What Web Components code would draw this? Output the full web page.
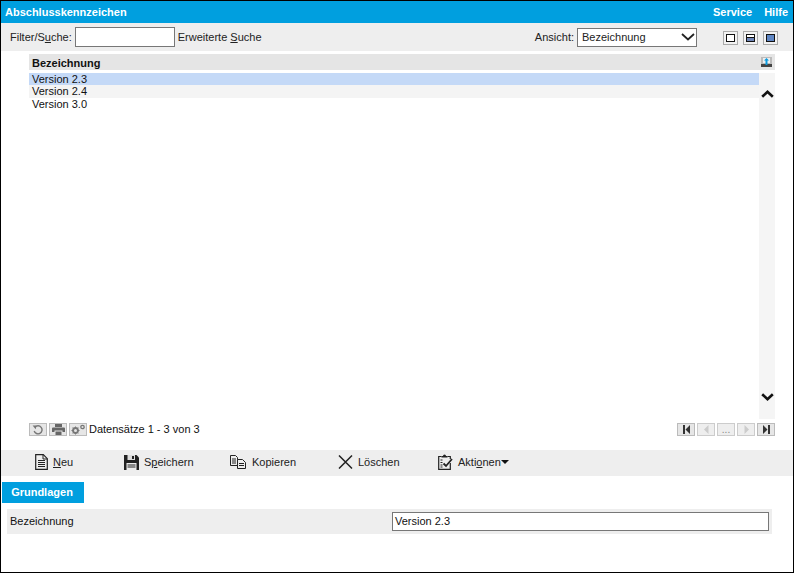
<!DOCTYPE html>
<html lang="de">
<head>
<meta charset="utf-8">
<title>Abschlusskennzeichen</title>
<style>
  html, body { margin: 0; padding: 0; background: #fff; }
  body { font: 11px "Liberation Sans", Arial, sans-serif; color: #111; }
</style>
</head>
<body>
<app-window>
  <title-bar heading="Abschlusskennzeichen"></title-bar>
  <filter-bar></filter-bar>
  <data-grid></data-grid>
  <grid-footer></grid-footer>
  <action-bar></action-bar>
  <tab-strip label="Grundlagen"></tab-strip>
  <form-row label="Bezeichnung" value="Version 2.3"></form-row>
</app-window>

<script>
const ICONS = {
  reload: `<svg width="12" height="11" viewBox="0 0 12 11"><path d="M3 3.2A4 4 0 1 1 2.2 7" fill="none" stroke="#777" stroke-width="1.4"/><path d="M.6 1.4 4.6 1.4 3.6 5.2Z" fill="#777"/></svg>`,
  print: `<svg width="13" height="11" viewBox="0 0 13 11"><path d="M3 0h7v3H3zM1 3.5h11a1 1 0 0 1 1 1V8h-2.500V6.500h-8V8H0V4.500a1 1 0 0 1 1-1zM3.500 7.500h6V11h-6z" fill="#666"/></svg>`,
  gears: `<svg width="16" height="11" viewBox="0 0 16 11"><circle cx="5.500" cy="6.500" r="2.600" fill="none" stroke="#777" stroke-width="1.600"/><path d="M5.500 2.500v8M1.500 6.500h8M2.700 3.700l5.600 5.600M8.300 3.700l-5.600 5.600" stroke="#777"/><circle cx="5.500" cy="6.500" r="1.500" fill="#e6e6e6"/><circle cx="12.500" cy="3" r="1.700" fill="none" stroke="#777" stroke-width="1.300"/></svg>`,
  first: `<svg width="9" height="9" viewBox="0 0 9 9"><path d="M1 0h2v9H1zM8 0v9L3.500 4.500z" fill="#333"/></svg>`,
  prev: `<svg width="9" height="9" viewBox="0 0 9 9"><path d="M6.500 0v9L2 4.500z" fill="#ccc"/></svg>`,
  next: `<svg width="9" height="9" viewBox="0 0 9 9"><path d="M2.500 0v9L7 4.500z" fill="#ccc"/></svg>`,
  last: `<svg width="9" height="9" viewBox="0 0 9 9"><path d="M1 0v9L5.500 4.500zM6 0h2v9H6z" fill="#333"/></svg>`,
  neu: `<svg width="13" height="16" viewBox="0 0 13 16"><path d="M.7.700h7.600l4 4v10.600H.7z" fill="none" stroke="#222" stroke-width="1.200"/><path d="M8 .7v4.300h4.300M3 6.500h7M3 8.500h7M3 10.500h7M3 12.500h7" fill="none" stroke="#222"/></svg>`,
  save: `<svg width="15" height="15" viewBox="0 0 15 15"><path d="M0 0h12.500L15 2.500V15H0z" fill="#222"/><path d="M3.500 0h7.500v5H3.500z" fill="#ddd"/><path d="M8 1h2v3H8z" fill="#222"/><path d="M2.500 8h10v7h-10z" fill="#eee"/><path d="M3.500 10h8M3.500 12h8" stroke="#222"/></svg>`,
  copy: `<svg width="16" height="14" viewBox="0 0 16 14"><path d="M.5.500h5l2 2v8h-7z" fill="#eee" stroke="#222"/><path d="M2 4h4M2 6h4M2 8h4" stroke="#222"/><path d="M7.500 4.500h5l3 3v6h-8z" fill="#eee" stroke="#222"/><path d="M9 8.500h5M9 10.500h5" stroke="#222"/></svg>`,
  del: `<svg width="15" height="14" viewBox="0 0 15 14"><path d="M1 .500 14 13.500M14 .500 1 13.500" fill="none" stroke="#222" stroke-width="1.500"/></svg>`,
  actions: `<svg width="15" height="16" viewBox="0 0 15 16"><path d="M3.500 2.500H.7v12.800h11.600V9M9.500 2.500h2.800V5" fill="none" stroke="#222" stroke-width="1.200"/><path d="M3.500 3.500V2h1.500a1.500 1.500 0 0 1 3 0h1.500v1.500z" fill="#222"/><path d="M2.500 6h2M2.500 8.500h2M2.500 11h2M2.500 13h2" stroke="#222"/><path d="M5.500 9.500 8 12l6-7" fill="none" stroke="#222" stroke-width="1.800"/></svg>`,
  chevronUp: `<svg width="13" height="8" viewBox="0 0 13 8"><path d="M1.200 6.800 6.500 1.800l5.300 5" fill="none" stroke="#111" stroke-width="2.600"/></svg>`,
  chevronDown: `<svg width="13" height="8" viewBox="0 0 13 8"><path d="M1.200 1.200 6.500 6.200l5.300-5" fill="none" stroke="#111" stroke-width="2.600"/></svg>`,
  chevronSelect: `<svg width="14" height="8" viewBox="0 0 14 8"><path d="M1 1 7 6.500 13 1" fill="none" stroke="#222" stroke-width="1.800"/></svg>`,
  exportTo: `<svg width="11" height="10" viewBox="0 0 11 10"><path d="M0 0h11v10H0z" fill="#bbb"/><path d="M2 1h7v5H2z" fill="#eee"/><path d="M0 7h11v3H0z" fill="#444"/><path d="M5.500 1 8 3.500H6.500V8h-2V3.500H3z" fill="#0a9be0"/></svg>`
};

// shared helper for small classes that only render a template string
class BaseElement extends HTMLElement {
  constructor() {
    super();
    this.attachShadow({ mode: 'open' });
  }
  connectedCallback() {
    this.shadowRoot.innerHTML = this.render();
  }
}

class AppWindow extends BaseElement {
  render() {
    return `<style>
      :host { display: block; width: 794px; height: 573px; box-sizing: border-box; border: 1px solid #000; overflow: hidden; }
    </style><slot></slot>`;
  }
}

class TitleBar extends BaseElement {
  render() {
    return `<style>
      :host { display: flex; justify-content: space-between; align-items: center; height: 22px; background: #009fdf; color: #fff; font-weight: 700; padding: 0 5px 0 4px; }
      nav { display: flex; gap: 12px; }
    </style>
    <span>${this.getAttribute('heading')}</span>
    <nav><span>Service</span><span>Hilfe</span></nav>`;
  }
}

class ViewToggle extends BaseElement {
  render() {
    const mode = this.getAttribute('mode');
    return `<style>
      :host { display: block; box-sizing: border-box; width: 15px; height: 14px; border: 1px solid #aaa; background: #f2f2f2; padding: 2px; }
      div { box-sizing: border-box; height: 100%; border: 1px solid #111; background: #fff; }
      .half { background: linear-gradient(#fff 2px, #111 2px, #111 3px, #6f86b8 3px); }
      .full { background: #5f86c4; }
    </style><div class="${mode}"></div>`;
  }
}

class FilterBar extends BaseElement {
  render() {
    return `<style>
      :host { display: flex; align-items: center; height: 28px; background: #eee; padding-left: 9px; color: #222; }
      .search { box-sizing: border-box; width: 100px; height: 20px; margin: 0 3px; border: 1px solid #777; background: #fff; }
      .view { margin-left: auto; display: flex; align-items: center; }
      .select { box-sizing: border-box; display: flex; justify-content: space-between; align-items: center; width: 120px; height: 19px; margin: 0 26px 0 3px; padding: 0 1px 0 4px; border: 1px solid #777; background: #fff; }
      .toggles { display: flex; gap: 5px; margin-right: 15px; margin-top: 2px; }
      u { text-underline-offset: 1px; }
    </style>
    <span>Filter/S<u>u</u>che:</span>
    <div class="search"></div>
    <span>Erweiterte <u>S</u>uche</span>
    <div class="view">
      <span>Ansicht:</span>
      <div class="select"><span>Bezeichnung</span>${ICONS.chevronSelect}</div>
      <div class="toggles">
        <view-toggle mode="empty"></view-toggle>
        <view-toggle mode="half"></view-toggle>
        <view-toggle mode="full"></view-toggle>
      </div>
    </div>`;
  }
}

class DataGrid extends BaseElement {
  render() {
    return `<style>
      :host { display: block; margin: 3px 18px 0 28px; }
      .head { display: flex; justify-content: space-between; align-items: center; height: 16px; background: #e5e5e5; font-weight: 700; padding: 0 3px; color: #111; }
      .head span { padding-top: 2px; }
      .body { display: flex; height: 346px; margin-top: 3px; }
      .rows { flex: 1; }
      .row { height: 13px; line-height: 13px; padding-left: 3px; }
      .row.sel { height: 12px; line-height: 12px; background: #c4d9f7; }
      .row.alt { background: #f4f4f4; }
      .scroll { display: flex; flex-direction: column; justify-content: space-between; align-items: center; width: 16px; padding: 17px 0 18px; box-sizing: border-box; background: #f5f5f5; }
    </style>
    <div class="head"><span>Bezeichnung</span>${ICONS.exportTo}</div>
    <div class="body">
      <div class="rows">
        <div class="row sel">Version 2.3</div>
        <div class="row alt">Version 2.4</div>
        <div class="row">Version 3.0</div>
      </div>
      <div class="scroll">${ICONS.chevronUp}${ICONS.chevronDown}</div>
    </div>`;
  }
}

class GridFooter extends BaseElement {
  render() {
    const btn = (icon) => `<span class="btn">${icon}</span>`;
    return `<style>
      :host { display: flex; align-items: center; height: 15px; margin: 3px 18px 0 28px; }
      .group { display: flex; gap: 2px; }
      .btn { box-sizing: border-box; display: flex; justify-content: center; align-items: center; width: 18px; height: 13px; border: 1px solid #bbb; background: #e6e6e6; color: #888; font-size: 10px; overflow: hidden; }
      .pager { margin-left: auto; }
      .pager .off { background: #eee; border-color: #ccc; }
      span.count { margin-left: 2px; padding-bottom: 2px; }
    </style>
    <div class="group">${btn(ICONS.reload)}${btn(ICONS.print)}${btn(ICONS.gears)}</div>
    <span class="count">Datensätze 1 - 3 von 3</span>
    <div class="group pager">
      ${btn(ICONS.first)}
      <span class="btn off">${ICONS.prev}</span>
      <span class="btn off">...</span>
      <span class="btn off">${ICONS.next}</span>
      ${btn(ICONS.last)}
    </div>`;
  }
}

class ActionBar extends BaseElement {
  render() {
    return `<style>
      :host { display: flex; align-items: center; box-sizing: border-box; height: 26px; margin-top: 13px; background: #eee; padding: 0 0 2px 34px; color: #222; }
      .item { display: flex; align-items: center; gap: 5px; }
      .item svg { flex: none; }
      .caret { width: 0; height: 0; border: 4px solid transparent; border-top: 4px solid #111; border-bottom: 0; margin-left: -5px; }
      .neu { width: 89px; } .save { width: 106px; } .copy { width: 108px; gap: 6px; } .del { width: 100px; }
    </style>
    <div class="item neu">${ICONS.neu}<span><u>N</u>eu</span></div>
    <div class="item save">${ICONS.save}<span>S<u>p</u>eichern</span></div>
    <div class="item copy">${ICONS.copy}<span>Kopieren</span></div>
    <div class="item del">${ICONS.del}<span>Löschen</span></div>
    <div class="item">${ICONS.actions}<span>Akti<u>o</u>nen</span><i class="caret"></i></div>`;
  }
}

class TabStrip extends BaseElement {
  render() {
    return `<style>
      :host { display: flex; margin: 6px 0 0 1px; }
      span { display: block; box-sizing: border-box; width: 82px; height: 21px; line-height: 21px; padding-right: 2px; text-align: center; background: #009fdf; color: #fff; font-weight: 700; }
    </style><span>${this.getAttribute('label')}</span>`;
  }
}

class FormRow extends BaseElement {
  render() {
    return `<style>
      :host { display: flex; align-items: center; height: 25px; margin: 6px 21px 0 6px; background: #eee; padding-left: 3px; }
      label { width: 382px; padding-bottom: 2px; }
      .field { box-sizing: border-box; width: 377px; height: 19px; line-height: 17px; border: 1px solid #777; background: #fff; padding-left: 2px; }
    </style>
    <label>${this.getAttribute('label')}</label>
    <div class="field">${this.getAttribute('value')}</div>`;
  }
}

customElements.define('app-window', AppWindow);
customElements.define('title-bar', TitleBar);
customElements.define('view-toggle', ViewToggle);
customElements.define('filter-bar', FilterBar);
customElements.define('data-grid', DataGrid);
customElements.define('grid-footer', GridFooter);
customElements.define('action-bar', ActionBar);
customElements.define('tab-strip', TabStrip);
customElements.define('form-row', FormRow);
</script>
</body>
</html>
